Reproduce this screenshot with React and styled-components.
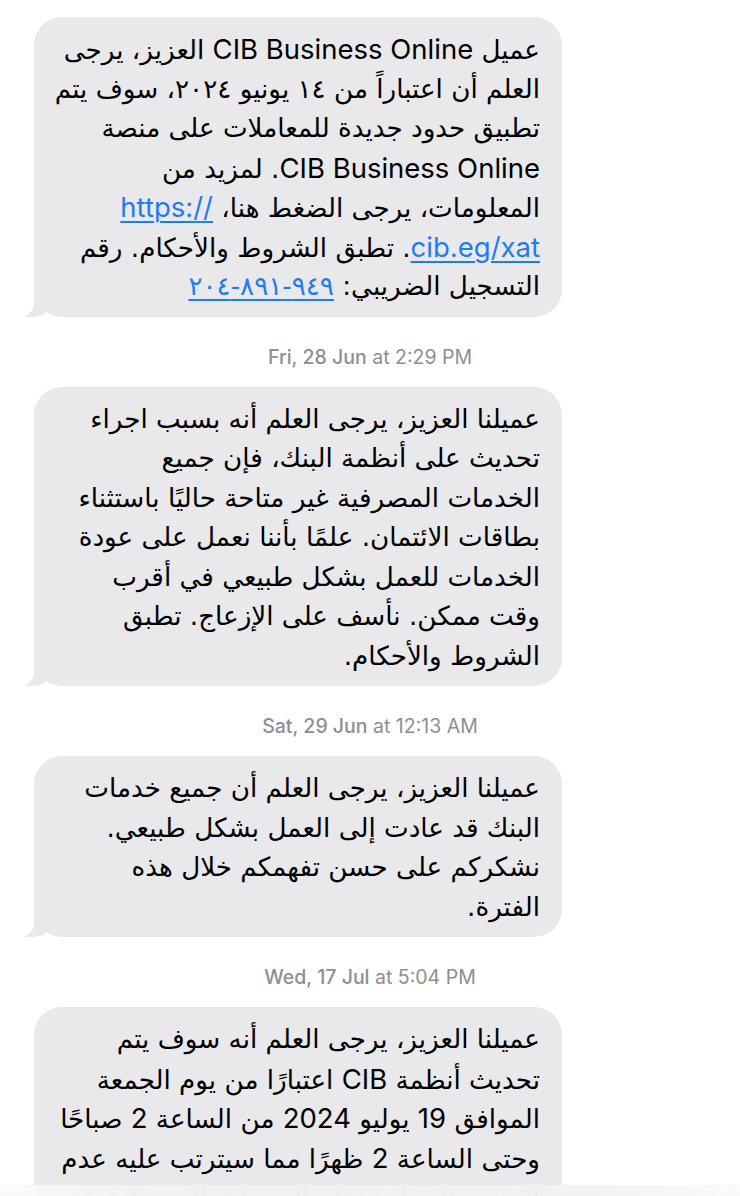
import styled, { createGlobalStyle } from "styled-components";

const GlobalStyle = createGlobalStyle`
  html, body {
    margin: 0;
    padding: 0;
    background: #fff;
  }
  body {
    font-family: "Inter", "DejaVu Sans", sans-serif;
    -webkit-font-smoothing: antialiased;
  }
`;

const Thread = styled.main`
  display: flex;
  flex-direction: column;
  padding-top: 17px;
  height: 1196px;
  box-sizing: border-box;
  overflow: hidden;
`;

const Group = styled.section`
  display: flex;
  flex-direction: column;
`;

const Stamp = styled.div`
  margin: 28px 0 18px;
  text-align: center;
  font-size: 19.5px;
  line-height: 24px;
  color: #8e8e93;

  b {
    font-weight: 500;
  }
`;

const Bubble = styled.div`
  position: relative;
  width: 528px;
  box-sizing: border-box;
  margin-left: 34px;
  padding: 13px 22px 10px;
  background: #e9e9eb;
  border-radius: 28px;
  color: #000;
  font-family: "DejaVu Sans", "Inter", sans-serif;
  font-size: 26.2px;
  line-height: 39.5px;
  text-align: right;

  /* tail, bottom left */
  &::before {
    content: "";
    position: absolute;
    left: -9px;
    bottom: 0;
    width: 30px;
    height: 30px;
    background: #e9e9eb;
    border-bottom-right-radius: 22px;
  }
  &::after {
    content: "";
    position: absolute;
    left: -16px;
    bottom: 0;
    width: 16px;
    height: 30px;
    background: #fff;
    border-bottom-right-radius: 14px;
  }
`;

const Line = styled.div`
  height: 39.5px;
  white-space: nowrap;
`;

// Latin words and western digits are set in Inter
const Latin = styled.span`
  font-family: "Inter", sans-serif;
  font-size: 27.5px;
`;

const Link = styled.a`
  color: #1f7cf0;
  text-decoration: underline;
  text-decoration-thickness: 1.5px;
  text-underline-offset: 4px;
  direction: ${(p) => (p.$ltr ? "ltr" : "inherit")};
  unicode-bidi: ${(p) => (p.$ltr ? "isolate" : "normal")};
`;

const BottomBar = styled.div`
  position: fixed;
  left: 0;
  right: 0;
  bottom: 0;
  height: 11px;
  background: linear-gradient(
    90deg,
    rgba(250, 250, 250, 0.95),
    rgba(242, 242, 243, 0.96) 20%,
    rgba(242, 242, 243, 0.96) 80%,
    rgba(250, 250, 250, 0.95)
  );
  backdrop-filter: blur(6px);
`;

function mixed(text) {
  return text
    .split(/([A-Za-z0-9]+(?: [A-Za-z0-9]+)*)/)
    .map((part, i) => (i % 2 ? <Latin key={i}>{part}</Latin> : part));
}

const messages = [
  {
    id: "m1",
    lines: [
      mixed("عميل CIB Business Online العزيز، يرجى"),
      "العلم أن اعتباراً من ١٤ يونيو ٢٠٢٤، سوف يتم",
      "تطبيق حدود جديدة للمعاملات على منصة",
      mixed("CIB Business Online. لمزيد من"),
      <>
        المعلومات، يرجى الضغط هنا،{" "}
        <Link href="https://cib.eg/xat" $ltr>
          <Latin>https://</Latin>
        </Link>
      </>,
      <>
        <Link href="https://cib.eg/xat" $ltr>
          <Latin>cib.eg/xat</Latin>
        </Link>
        . تطبق الشروط والأحكام. رقم
      </>,
      <>
        التسجيل الضريبي: <Link href="tel:204891949">٩٤٩-٨٩١-٢٠٤</Link>
      </>,
    ],
  },
  {
    id: "m2",
    stamp: ["Fri, 28 Jun", "at 2:29 PM"],
    lines: [
      "عميلنا العزيز، يرجى العلم أنه بسبب اجراء",
      "تحديث على أنظمة البنك، فإن جميع",
      "الخدمات المصرفية غير متاحة حاليًا باستثناء",
      "بطاقات الائتمان. علمًا بأننا نعمل على عودة",
      "الخدمات للعمل بشكل طبيعي في أقرب",
      "وقت ممكن. نأسف على الإزعاج. تطبق",
      "الشروط والأحكام.",
    ],
  },
  {
    id: "m3",
    stamp: ["Sat, 29 Jun", "at 12:13 AM"],
    lines: [
      "عميلنا العزيز، يرجى العلم أن جميع خدمات",
      "البنك قد عادت إلى العمل بشكل طبيعي.",
      "نشكركم على حسن تفهمكم خلال هذه",
      "الفترة.",
    ],
  },
  {
    id: "m4",
    stamp: ["Wed, 17 Jul", "at 5:04 PM"],
    lines: [
      "عميلنا العزيز، يرجى العلم أنه سوف يتم",
      mixed("تحديث أنظمة CIB اعتبارًا من يوم الجمعة"),
      mixed("الموافق 19 يوليو 2024 من الساعة 2 صباحًا"),
      mixed("وحتى الساعة 2 ظهرًا مما سيترتب عليه عدم"),
      "القدرة على استخدام الخدمات المصرفية عبر",
      "القنوات الإلكترونية. تطبق الشروط والأحكام.",
    ],
  },
];

export default function App() {
  return (
    <>
      <GlobalStyle />
      <Thread>
        {messages.map((msg) => (
          <Group key={msg.id}>
            {msg.stamp && (
              <Stamp>
                <b>{msg.stamp[0]}</b> {msg.stamp[1]}
              </Stamp>
            )}
            <Bubble dir="rtl">
              {msg.lines.map((line, i) => (
                <Line key={i}>{line}</Line>
              ))}
            </Bubble>
          </Group>
        ))}
      </Thread>
      <BottomBar />
    </>
  );
}
